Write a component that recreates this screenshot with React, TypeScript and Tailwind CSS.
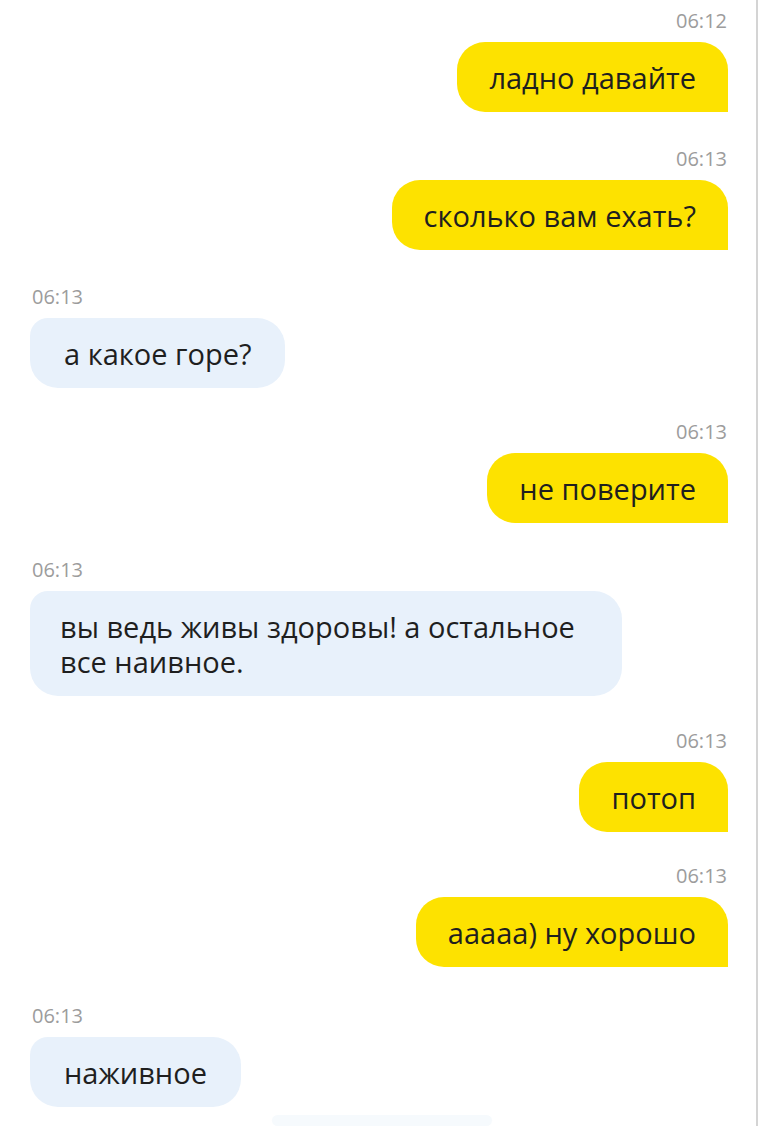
const messages = [
  { time: '06:12', text: 'ладно давайте', mine: true, gap: 'mt-[11px]' },
  { time: '06:13', text: 'сколько вам ехать?', mine: true, gap: 'mt-[37px]' },
  { time: '06:13', text: 'а какое горе?', mine: false, gap: 'mt-[37px]' },
  { time: '06:13', text: 'не поверите', mine: true, gap: 'mt-[34px]' },
  { time: '06:13', text: 'вы ведь живы здоровы! а остальное\nвсе наивное.', mine: false, gap: 'mt-[37px]', wide: true },
  { time: '06:13', text: 'потоп', mine: true, gap: 'mt-[35px]' },
  { time: '06:13', text: 'ааааа) ну хорошо', mine: true, gap: 'mt-[34px]' },
  { time: '06:13', text: 'наживное', mine: false, gap: 'mt-[39px]' },
];

export default function App() {
  return (
    <div
      className="w-[760px] h-[1126px] overflow-hidden bg-white"
      style={{ fontFamily: '"Open Sans", "Noto Sans", sans-serif' }}
    >
      <div className="w-[758px] h-full border-r-2 border-[#d4d4d4] flex flex-col pl-[30px] pr-[28px]">
        {messages.map((m, i) => (
          <div key={i} className={`flex flex-col ${m.gap} ${m.mine ? 'items-end' : 'items-start'}`}>
            <div className={`h-[20px] leading-[20px] text-[20px] text-[#9c9c9c] ${m.mine ? 'pr-[1px]' : 'pl-[2px]'}`}>
              {m.time}
            </div>
            <div
              className={`mt-[11px] py-[17.5px] text-[29px] leading-[35px] text-[#1f1f1f] whitespace-pre-line ${
                m.wide ? 'w-[592px] px-[30px]' : m.mine ? 'px-[32px]' : 'px-[34px]'
              } ${
                m.mine
                  ? 'bg-[#fde200] rounded-t-[28px] rounded-bl-[28px]'
                  : 'bg-[#e8f1fb] rounded-[28px] rounded-tl-[18px]'
              }`}
            >
              {m.text}
            </div>
          </div>
        ))}
        <div className="mt-[8px] ml-[242px] w-[220px] h-[40px] rounded-[24px] bg-[#f6fafd]" />
      </div>
    </div>
  );
}
